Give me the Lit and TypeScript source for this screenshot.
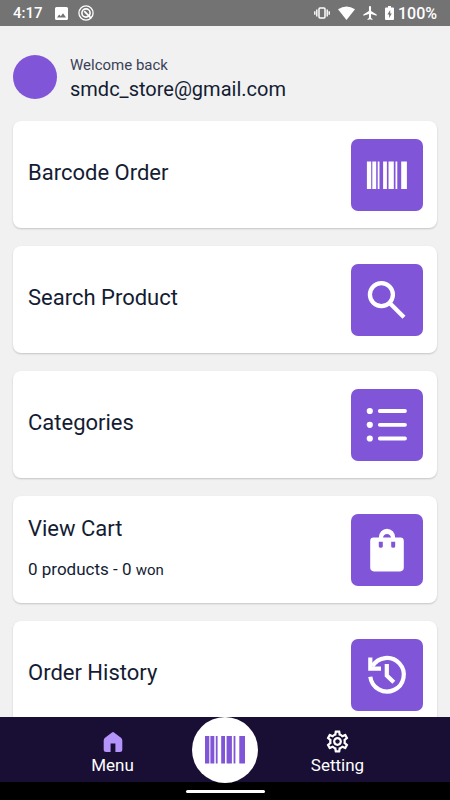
import { LitElement, html, svg, css } from "lit";
import { customElement, property } from "lit/decorators.js";

const barcode = svg`
  <path fill="currentColor" d="M0 0h4.3v27.6H0zM5.4 0h3.9v27.6H5.4zM10.8 0h1.8v27.6h-1.8zM16.2 0H20v27.6h-3.8zM21.6 0h5.3v27.6h-5.3zM28.6 0h1.8v27.6h-1.8zM34.3 0H40v27.6h-5.7z"/>`;

const icons: Record<string, unknown> = {
  barcode: svg`<g transform="translate(15.9 22.4)">${barcode}</g>`,
  search: svg`
    <g fill="none" stroke="currentColor" stroke-width="4.3">
      <circle cx="30.4" cy="30.6" r="11.5"/>
      <path d="M38.4 38.8L53 53.2"/>
    </g>`,
  list: svg`
    <g fill="currentColor">
      <circle cx="18.8" cy="22" r="3.1"/><circle cx="18.8" cy="35.8" r="3.1"/><circle cx="18.8" cy="49.5" r="3.1"/>
    </g>
    <path fill="none" stroke="currentColor" stroke-width="3.8" stroke-linecap="round" d="M28.8 22H54M28.8 35.8H54M28.8 49.5H54"/>`,
  bag: svg`
    <path fill="currentColor" fill-rule="evenodd" d="M22.6 23.6H27.8A8.2 8.9 0 0 1 44.2 23.6H49.4Q52.8 23.6 52.8 27V53.6Q52.8 57.4 49 57.4H23Q19.2 57.4 19.2 53.6V27Q19.2 23.6 22.6 23.6ZM32 23.6H40A4.1 4.6 0 0 0 32 23.6ZM27.8 27.8V32.4Q27.8 33.8 29.8 33.8T31.8 32.4V27.8ZM40.2 27.8V32.4Q40.2 33.8 42.2 33.8T44.2 32.4V27.8Z"/>`,
  history: svg`
    <g fill="none" stroke="currentColor" stroke-width="4.2">
      <path d="M19.3 37.8A16.8 16.8 0 1 0 21.4 27.4"/>
      <path d="M19.3 18.4V29.6H30"/>
      <path d="M35.8 25V36.6L42.8 43.2"/>
    </g>`,
};

@customElement("status-bar")
class StatusBar extends LitElement {
  static styles = css`
    :host {
      display: flex;
      align-items: center;
      justify-content: space-between;
      flex: none;
      height: 26px;
      padding: 0 13px;
      background: #737373;
      color: #fff;
      font-size: 15px;
      font-weight: 500;
    }
    .side { display: flex; align-items: center; }
    .left { gap: 10px; }
    .right { gap: 4px; }
    .time { padding-right: 2px; }
    .level { font-size: 16px; }
    svg { display: block; }
    .signals { gap: 8px; display: flex; align-items: center; }
  `;
  render() {
    return html`
      <div class="side left">
        <span class="time">4:17</span>
        <svg width="13" height="13" viewBox="0 0 13 13" aria-hidden="true">
          <path fill="#fff" fill-rule="evenodd" d="M1.5 0h10Q13 0 13 1.5v10Q13 13 11.5 13h-10Q0 13 0 11.5v-10Q0 0 1.5 0ZM2 10.5h9L8 6.3 5.8 9.2 4.2 7.4Z"/>
        </svg>
        <svg width="16" height="16" viewBox="0 0 16 16" fill="none" stroke="#fff" aria-hidden="true">
          <circle cx="8" cy="8" r="7.1" stroke-width="1.3"/>
          <circle cx="8" cy="8" r="4.1" stroke-width="1.6"/>
          <path stroke-width="1.8" d="M6.2 6.2L12.8 12.8"/>
        </svg>
      </div>
      <div class="side right">
        <div class="signals">
          <svg width="16" height="12" viewBox="0 0 16 12" fill="none" stroke="#fff" aria-hidden="true">
            <rect x="5" y="1" width="6" height="10" rx="1" stroke-width="1.5"/>
            <path stroke-width="1.4" d="M2.8 2.5v7M13.2 2.5v7M.8 4.2v3.6M15.2 4.2v3.6"/>
          </svg>
          <svg width="17" height="14" viewBox="0 0 17 14" aria-hidden="true">
            <path fill="#fff" d="M8.5 14L0 3.3Q8.500-2.300 17 3.300Z"/>
          </svg>
          <svg width="14" height="14" viewBox="2 2 19 20" aria-hidden="true">
            <path fill="#fff" d="M21 16v-2l-8-5V3.500c0-.83-.67-1.500-1.500-1.500S10 2.670 10 3.500V9l-8 5v2l8-2.500V19l-2 1.500V22l3.500-1 3.500 1v-1.500L13 19v-5.500l8 2.500z"/>
          </svg>
          <svg width="9" height="14" viewBox="0 0 9 14" aria-hidden="true">
            <path fill="#fff" fill-rule="evenodd" d="M1 1.4h2V0h3v1.4h2Q9 1.4 9 2.4V13Q9 14 8 14H1Q0 14 0 13V2.400Q0 1.400 1 1.400ZM5.200 4L2.400 8.400h1.700V12L6.800 7.400H5.200Z"/>
          </svg>
        </div>
        <span class="level">100%</span>
      </div>`;
  }
}

@customElement("menu-card")
class MenuCard extends LitElement {
  @property() label = "";
  @property() icon = "";
  @property() detail = "";
  @property() unit = "";
  static styles = css`
    :host { display: block; }
    .card {
      display: flex;
      align-items: center;
      justify-content: space-between;
      width: 100%;
      min-height: 107px;
      padding: 17px 14px 17px 15px;
      box-sizing: border-box;
      border: 0;
      border-radius: 8px;
      background: #fff;
      box-shadow: 0 1px 2px #00000030;
      color: #141c33;
      font: inherit;
      text-align: left;
      cursor: pointer;
    }
    .text { display: flex; flex-direction: column; gap: 14px; padding-bottom: 3px; }
    .label { font-size: 22px; line-height: 28px; }
    .detail { font-size: 17px; line-height: 24px; }
    .unit { font-size: 15px; }
    .tile { flex: none; display: block; border-radius: 7px; background: #8055d8; color: #fff; }
  `;
  render() {
    return html`
      <button class="card" type="button">
        <span class="text">
          <span class="label">${this.label}</span>
          ${this.detail
            ? html`<span class="detail">${this.detail} <span class="unit">${this.unit}</span></span>`
            : null}
        </span>
        <svg class="tile" width="72" height="72" viewBox="0 0 72 72" aria-hidden="true">${icons[this.icon]}</svg>
      </button>`;
  }
}

@customElement("tab-bar")
class TabBar extends LitElement {
  static styles = css`
    :host { display: block; flex: none; background: #000; }
    .tabs { position: relative; display: flex; height: 65px; background: #190f35; }
    .tab {
      flex: 1;
      display: flex;
      flex-direction: column;
      align-items: center;
      padding-top: 12px;
      color: #fff;
      font-size: 17px;
      line-height: 22px;
      text-decoration: none;
    }
    .tab svg { display: block; height: 25px; }
    .scan {
      position: absolute;
      left: 50%;
      top: 50%;
      transform: translate(-50%, -50%);
      display: grid;
      place-items: center;
      width: 66px;
      height: 66px;
      padding: 0;
      border: 0;
      border-radius: 50%;
      background: #fff;
      color: #8055d8;
      cursor: pointer;
    }
    .gesture { display: flex; justify-content: center; align-items: center; height: 18px; }
    .handle { width: 79px; height: 3px; border-radius: 2px; background: #fff; }
  `;
  render() {
    return html`
      <nav class="tabs">
        <a class="tab" href="#menu">
          <svg width="24" viewBox="0 0 24 25" aria-hidden="true">
            <path fill="#b493fb" d="M11 3.500Q12 2.700 13 3.500L20 8.800Q21.300 9.800 21.300 11.400V20.500Q21.300 23 18.800 23H14.400V14.500H9.600V23H5.200Q2.700 23 2.700 20.500V11.400Q2.700 9.800 4 8.800Z"/>
          </svg>
          <span>Menu</span>
        </a>
        <a class="tab" href="#setting">
          <svg width="25" viewBox="0.700 0.700 22.600 22.600" aria-hidden="true">
            <path fill="#fff" d="M19.430 12.980c.04-.32.07-.64.07-.98 0-.34-.03-.66-.07-.98l2.110-1.650c.19-.15.24-.42.12-.64l-2-3.460c-.09-.16-.26-.25-.44-.25-.06 0-.12.01-.17.03l-2.490 1c-.52-.4-1.080-.73-1.690-.98l-.38-2.650C14.460 2.180 14.250 2 14 2h-4c-.25 0-.46.18-.49.42l-.38 2.650c-.61.25-1.170.59-1.690.98l-2.490-1c-.06-.02-.12-.03-.18-.03-.17 0-.34.09-.43.25l-2 3.460c-.13.22-.07.49.12.64l2.110 1.650c-.04.32-.07.65-.07.98 0 .33.03.66.07.98l-2.110 1.650c-.19.15-.24.42-.12.64l2 3.460c.09.16.26.25.44.25.06 0 .12-.01.17-.03l2.490-1c.52.4 1.080.73 1.690.98l.38 2.650c.03.24.24.42.49.42h4c.25 0 .46-.18.49-.42l.38-2.650c.61-.25 1.170-.59 1.690-.98l2.490 1c.06.02.12.03.18.03.17 0 .34-.09.43-.25l2-3.460c.12-.22.07-.49-.12-.64l-2.110-1.650zm-1.980-1.710c.04.31.05.52.05.73 0 .21-.02.43-.05.73l-.14 1.130.89.7 1.080.84-.7 1.210-1.270-.51-1.040-.42-.9.68c-.43.32-.84.56-1.250.73l-1.060.43-.16 1.130-.2 1.350h-1.400l-.19-1.350-.16-1.130-1.060-.43c-.43-.18-.83-.41-1.230-.71l-.91-.7-1.060.43-1.270.51-.7-1.210 1.080-.84.89-.7-.14-1.130c-.03-.31-.05-.54-.05-.74s.02-.43.05-.73l.14-1.130-.89-.7-1.080-.84.7-1.210 1.270.51 1.040.42.9-.68c.43-.32.84-.56 1.250-.73l1.060-.43.16-1.130.2-1.350h1.390l.19 1.350.16 1.130 1.060.43c.43.18.83.41 1.230.71l.91.7 1.060-.43 1.270-.51.7 1.210-1.070.85-.89.7.14 1.130zM12 8c-2.210 0-4 1.790-4 4s1.790 4 4 4 4-1.790 4-4-1.790-4-4-4zm0 6c-1.100 0-2-.9-2-2s.9-2 2-2 2 .9 2 2-.9 2-2 2z"/>
          </svg>
          <span>Setting</span>
        </a>
        <button class="scan" type="button" aria-label="Scan barcode">
          <svg width="40" height="28" viewBox="0 0 40 28" aria-hidden="true">${barcode}</svg>
        </button>
      </nav>
      <div class="gesture"><div class="handle"></div></div>`;
  }
}

@customElement("app-root")
class AppRoot extends LitElement {
  static styles = css`
    :host {
      display: flex;
      flex-direction: column;
      height: 100vh;
      background: #f1f1f1;
      color: #141c33;
      font-family: Roboto, "Liberation Sans", sans-serif;
    }
    .content {
      flex: 1;
      min-height: 0;
      overflow-y: auto;
      scrollbar-width: none;
      padding: 26px 13px;
    }
    .profile { display: flex; align-items: center; gap: 13px; }
    .avatar { width: 44px; height: 44px; border-radius: 50%; background: #8055d8; }
    .hello { padding-top: 2px; font-size: 15px; line-height: 22px; color: #3b4258; }
    .email { font-size: 20px; line-height: 26px; }
    .cards { display: flex; flex-direction: column; gap: 18px; margin-top: 19px; }
  `;
  render() {
    return html`
      <status-bar></status-bar>
      <main class="content">
        <header class="profile">
          <div class="avatar"></div>
          <div>
            <div class="hello">Welcome back</div>
            <div class="email">smdc_store@gmail.com</div>
          </div>
        </header>
        <div class="cards">
          <menu-card label="Barcode Order" icon="barcode"></menu-card>
          <menu-card label="Search Product" icon="search"></menu-card>
          <menu-card label="Categories" icon="list"></menu-card>
          <menu-card label="View Cart" icon="bag" detail="0 products - 0" unit="won"></menu-card>
          <menu-card label="Order History" icon="history"></menu-card>
        </div>
      </main>
      <tab-bar></tab-bar>`;
  }
}
